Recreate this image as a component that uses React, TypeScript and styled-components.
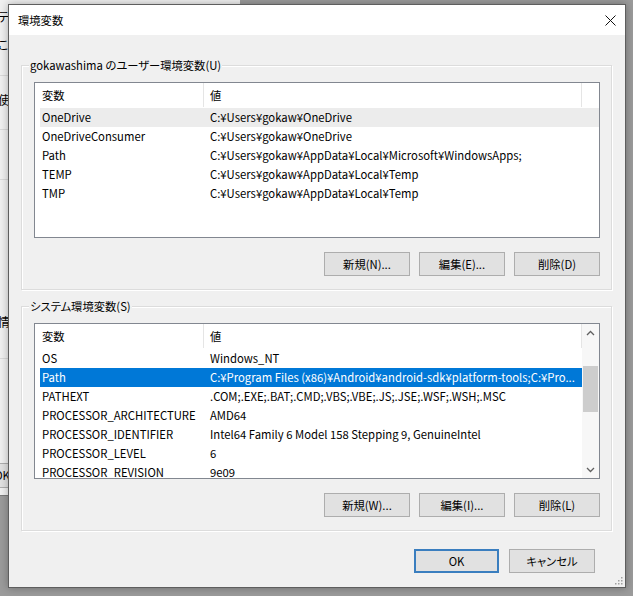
import React from "react";
import styled, { createGlobalStyle } from "styled-components";

const GlobalStyle = createGlobalStyle`
  html, body { margin: 0; padding: 0; }
  body {
    width: 633px;
    height: 596px;
    overflow: hidden;
    background: #9b9b9b;
    font-family: "Noto Sans CJK JP", "Noto Sans", sans-serif;
    font-size: 11.3px;
    color: #000;
  }
  * { box-sizing: border-box; }
`;

const Desktop = styled.div`
  position: relative;
  width: 633px;
  height: 596px;
  overflow: hidden;
  background: #9b9b9b;
`;

/* window behind the dialog */
const BackWindow = styled.div`
  position: absolute;
  left: 0;
  top: 0;
  width: 240px;
  height: 496px;
  background: #f0f0f0;
  border-bottom: 1px solid #7a7a7a;
  display: flex;
  flex-direction: column;
`;

const BackText = styled.div<{ $gap: number }>`
  margin-top: ${(p) => p.$gap}px;
  margin-left: -2px;
  height: 16px;
  line-height: 16px;
  font-size: 12px;
  white-space: nowrap;
  font-feature-settings: "palt";
`;

const BackRule = styled.div<{ $gap: number }>`
  margin-top: ${(p) => p.$gap}px;
  height: 1px;
  background: #d9d9d9;
`;

const BackButton = styled.div<{ $gap: number }>`
  margin-top: ${(p) => p.$gap}px;
  margin-left: -38px;
  width: 80px;
  height: 25px;
  line-height: 23px;
  text-align: center;
  background: #e1e1e1;
  border: 1px solid #adadad;
`;

const Dialog = styled.div`
  position: absolute;
  left: 8px;
  top: 4px;
  width: 618px;
  height: 584px;
  border: 1px solid #5e5e5e;
  background: #f0f0f0;
  box-shadow: 0 0 8px rgba(0, 0, 0, 0.3);
  display: flex;
  flex-direction: column;
`;

const TitleBar = styled.div`
  height: 30px;
  flex: none;
  background: #fff;
  display: flex;
  align-items: center;
  justify-content: space-between;
  padding-left: 9px;
`;

const TitleText = styled.span`
  line-height: 16px;
  font-feature-settings: "palt";
`;

const CloseButton = styled.div`
  width: 30px;
  height: 30px;
  display: flex;
  align-items: center;
  justify-content: center;
`;

const Body = styled.div`
  flex: 1;
  display: flex;
  flex-direction: column;
  padding: 30px 13px 0 12px;
`;

const GroupBox = styled.div<{ $gap: number }>`
  position: relative;
  margin-top: ${(p) => p.$gap}px;
  border: 1px solid #dcdcdc;
  box-shadow: inset 1px 1px 0 #fff, 1px 1px 0 #fff;
  padding: 16px 11px 13px 12px;
  display: flex;
  flex-direction: column;
`;

const GroupLabel = styled.span`
  position: absolute;
  top: -9px;
  left: 7px;
  padding: 0 1px;
  background: #f0f0f0;
  line-height: 16px;
  font-feature-settings: "palt";
  white-space: nowrap;
`;

const ListView = styled.div`
  height: 156px;
  border: 1px solid #828790;
  background: #fff;
  display: flex;
  overflow: hidden;
`;

const ListBody = styled.div`
  flex: 1;
  min-width: 0;
  padding-left: 5px;
  display: flex;
  flex-direction: column;
  overflow: hidden;
`;

const HeaderRow = styled.div`
  flex: none;
  height: 25px;
  display: grid;
  grid-template-columns: 164px 378px;
`;

const HeaderCell = styled.div<{ $first?: boolean }>`
  display: flex;
  align-items: center;
  padding-left: ${(p) => (p.$first ? 2 : 6)}px;
  border-right: 1px solid #e5e5e5;
  margin-bottom: 1px;
  font-feature-settings: "palt";
`;

const Row = styled.div<{ $state?: "hover" | "selected" }>`
  flex: none;
  height: 19px;
  display: grid;
  grid-template-columns: 164px 378px;
  align-items: center;
  background: ${(p) =>
    p.$state === "selected" ? "#0078d7" : p.$state === "hover" ? "#ececec" : "transparent"};
  color: ${(p) => (p.$state === "selected" ? "#fff" : "#000")};
`;

const Cell = styled.div<{ $first?: boolean }>`
  padding-left: ${(p) => (p.$first ? 2 : 6)}px;
  white-space: nowrap;
  overflow: hidden;
  text-overflow: ellipsis;
  line-height: 19px;
`;

const ScrollBar = styled.div`
  width: 17px;
  flex: none;
  background: #f7f7f7;
  display: flex;
  flex-direction: column;
  align-items: center;
`;

const ScrollArrow = styled.div`
  height: 17px;
  width: 17px;
  flex: none;
  display: flex;
  align-items: center;
  justify-content: center;
`;

const ScrollTrack = styled.div`
  flex: 1;
  width: 100%;
  display: flex;
  flex-direction: column;
  align-items: center;
  padding-top: 25px;
`;

const ScrollThumb = styled.div`
  width: 15px;
  height: 46px;
  background: #cdcdcd;
`;

const ButtonRow = styled.div`
  display: flex;
  justify-content: flex-end;
  gap: 9px;
  margin-top: 14px;
`;

const Button = styled.div<{ $default?: boolean; $w?: number }>`
  width: ${(p) => p.$w ?? 86}px;
  height: 24px;
  display: flex;
  align-items: center;
  justify-content: center;
  background: #e1e1e1;
  border: ${(p) => (p.$default ? "2px solid #3a7ebf" : "1px solid #adadad")};
  font-feature-settings: "palt";
  white-space: nowrap;
`;

const Footer = styled.div`
  display: flex;
  justify-content: flex-end;
  gap: 10px;
  margin-top: 18px;
  padding-right: 17px;
`;

const Grip = styled.svg`
  position: absolute;
  right: 2px;
  bottom: 2px;
`;

type Item = [string, string];

const userVars: Item[] = [
  ["OneDrive", "C:¥Users¥gokaw¥OneDrive"],
  ["OneDriveConsumer", "C:¥Users¥gokaw¥OneDrive"],
  ["Path", "C:¥Users¥gokaw¥AppData¥Local¥Microsoft¥WindowsApps;"],
  ["TEMP", "C:¥Users¥gokaw¥AppData¥Local¥Temp"],
  ["TMP", "C:¥Users¥gokaw¥AppData¥Local¥Temp"],
];

const sysVars: Item[] = [
  ["OS", "Windows_NT"],
  ["Path", "C:¥Program Files (x86)¥Android¥android-sdk¥platform-tools;C:¥Pro..."],
  ["PATHEXT", ".COM;.EXE;.BAT;.CMD;.VBS;.VBE;.JS;.JSE;.WSF;.WSH;.MSC"],
  ["PROCESSOR_ARCHITECTURE", "AMD64"],
  ["PROCESSOR_IDENTIFIER", "Intel64 Family 6 Model 158 Stepping 9, GenuineIntel"],
  ["PROCESSOR_LEVEL", "6"],
  ["PROCESSOR_REVISION", "9e09"],
];

const Chevron = ({ up }: { up?: boolean }) => (
  <svg width="9" height="6" viewBox="0 0 9 6">
    <path
      d={up ? "M1 5 L4.5 1.5 L8 5" : "M1 1 L4.5 4.5 L8 1"}
      fill="none"
      stroke="#606060"
      strokeWidth="1.3"
    />
  </svg>
);

const VarList = ({
  items,
  hover,
  selected,
  scroll,
}: {
  items: Item[];
  hover?: number;
  selected?: number;
  scroll?: boolean;
}) => (
  <ListView>
    <ListBody>
      <HeaderRow>
        <HeaderCell $first>変数</HeaderCell>
        <HeaderCell>値</HeaderCell>
      </HeaderRow>
      {items.map(([k, v], i) => (
        <Row key={k} $state={i === selected ? "selected" : i === hover ? "hover" : undefined}>
          <Cell $first>{k}</Cell>
          <Cell>{v}</Cell>
        </Row>
      ))}
    </ListBody>
    {scroll && (
      <ScrollBar>
        <ScrollArrow>
          <Chevron up />
        </ScrollArrow>
        <ScrollTrack>
          <ScrollThumb />
        </ScrollTrack>
        <ScrollArrow>
          <Chevron />
        </ScrollArrow>
      </ScrollBar>
    )}
  </ListView>
);

export default function App() {
  return (
    <Desktop>
      <GlobalStyle />
      <BackWindow>
        <BackText $gap={9}>ティ</BackText>
        <BackText $gap={12}>これ</BackText>
        <BackRule $gap={22} />
        <BackText $gap={16}>使用</BackText>
        <BackRule $gap={21} />
        <BackRule $gap={49} />
        <BackText $gap={134}>情報</BackText>
        <BackRule $gap={28} />
        <BackButton $gap={104}>OK</BackButton>
      </BackWindow>
      <Dialog>
        <TitleBar>
          <TitleText>環境変数</TitleText>
          <CloseButton>
            <svg width="11" height="11" viewBox="0 0 11 11">
              <path d="M0.5 0.5 L10.5 10.5 M10.5 0.5 L0.5 10.5" stroke="#111" strokeWidth="1" />
            </svg>
          </CloseButton>
        </TitleBar>
        <Body>
          <GroupBox $gap={0}>
            <GroupLabel>gokawashima のユーザー環境変数(U)</GroupLabel>
            <VarList items={userVars} hover={0} />
            <ButtonRow>
              <Button>新規(N)...</Button>
              <Button>編集(E)...</Button>
              <Button>削除(D)</Button>
            </ButtonRow>
          </GroupBox>
          <GroupBox $gap={16}>
            <GroupLabel>システム環境変数(S)</GroupLabel>
            <VarList items={sysVars} selected={1} scroll />
            <ButtonRow>
              <Button>新規(W)...</Button>
              <Button>編集(I)...</Button>
              <Button>削除(L)</Button>
            </ButtonRow>
          </GroupBox>
          <Footer>
            <Button $default $w={85}>OK</Button>
            <Button>キャンセル</Button>
          </Footer>
        </Body>
        <Grip width="10" height="10" viewBox="0 0 10 10">
          <g fill="#a0a0a0">
            <rect x="8" y="2" width="1.5" height="1.5" />
            <rect x="5" y="5" width="1.5" height="1.5" />
            <rect x="8" y="5" width="1.5" height="1.5" />
            <rect x="2" y="8" width="1.5" height="1.5" />
            <rect x="5" y="8" width="1.5" height="1.5" />
            <rect x="8" y="8" width="1.5" height="1.5" />
          </g>
        </Grip>
      </Dialog>
    </Desktop>
  );
}
